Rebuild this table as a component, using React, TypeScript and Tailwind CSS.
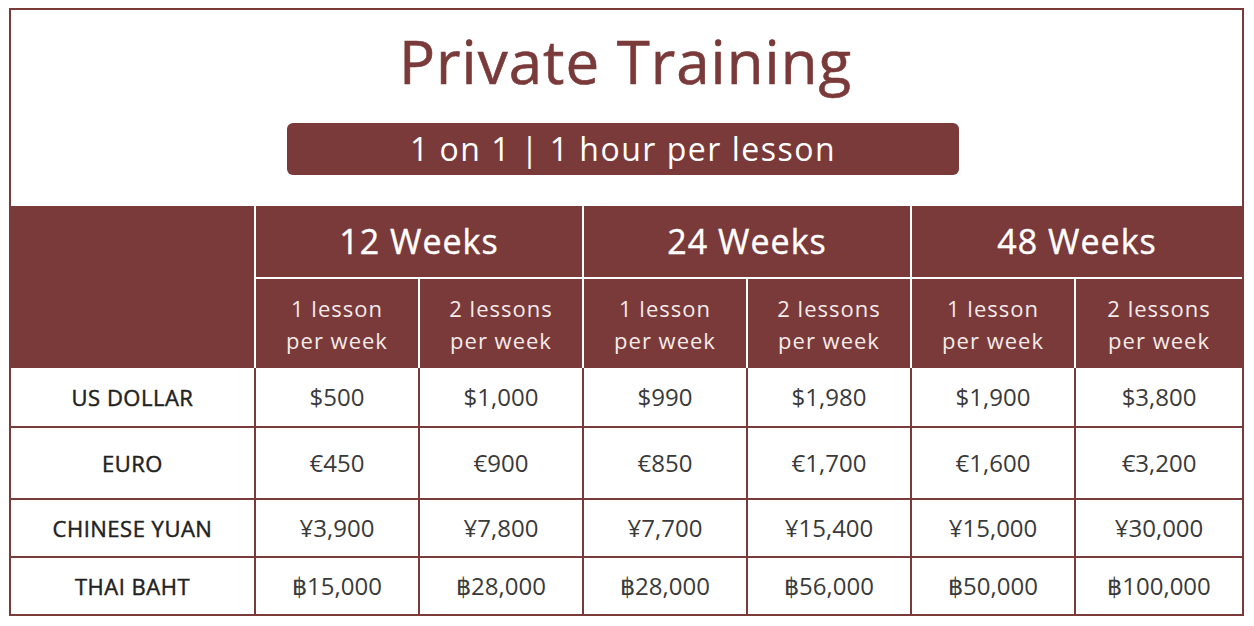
import React from 'react';

const weeks = ['12 Weeks', '24 Weeks', '48 Weeks'];

const rows = [
  { name: 'US DOLLAR', prices: ['$500', '$1,000', '$990', '$1,980', '$1,900', '$3,800'], h: 'h-[59px]' },
  { name: 'EURO', prices: ['€450', '€900', '€850', '€1,700', '€1,600', '€3,200'], h: 'h-[72px]' },
  { name: 'CHINESE YUAN', prices: ['¥3,900', '¥7,800', '¥7,700', '¥15,400', '¥15,000', '¥30,000'], h: 'h-[58px]' },
  { name: 'THAI BAHT', prices: ['฿15,000', '฿28,000', '฿28,000', '฿56,000', '฿50,000', '฿100,000'], h: 'h-[57px]' },
];

export default function App() {
  return (
    <div className="w-[1254px] h-[626px] bg-white pl-[9px] pt-[8px] font-['Open_Sans','Noto_Sans',sans-serif]">
      <div className="w-[1235px] border-2 border-[#7a3a3a] bg-white">
        {/* title block */}
        <div className="h-[196px] flex flex-col items-center">
          <h1 className="mt-[17px] mr-[2px] text-[60px] leading-[68px] text-[#7a3a3a] tracking-[1px] [-webkit-text-stroke:0.6px_#7a3a3a]">Private Training</h1>
          <div className="mt-[28px] mr-[7px] w-[672px] h-[52px] rounded-[6px] bg-[#7a3a3a] flex items-center justify-center">
            <span className="text-[32px] text-white tracking-[1.5px] leading-none">1 on 1 | 1 hour per lesson</span>
          </div>
        </div>

        {/* price table */}
        <table className="w-[1231px] table-fixed border-collapse">
          <colgroup>
            <col className="w-[244px]" />
            <col className="w-[164px]" />
            <col className="w-[164px]" />
            <col className="w-[164px]" />
            <col className="w-[164px]" />
            <col className="w-[164px]" />
            <col className="w-[167px]" />
          </colgroup>
          <thead className="bg-[#7a3a3a] text-white">
            <tr className="h-[72px]">
              <th rowSpan={2} className="border-r-2 border-white"></th>
              {weeks.map((w, i) => (
                <th
                  key={w}
                  colSpan={2}
                  className={`border-b-2 border-white text-[34px] font-normal tracking-[1px] [-webkit-text-stroke:0.4px_white] ${i < 2 ? 'border-r-2' : ''}`}
                >
                  {w}
                </th>
              ))}
            </tr>
            <tr className="h-[90px]">
              {[0, 1, 2, 3, 4, 5].map((i) => (
                <th
                  key={i}
                  className={`font-normal text-[22px] leading-[32px] tracking-[1px] text-[#f5eaea] ${i < 5 ? 'border-r-2 border-white' : ''}`}
                >
                  {i % 2 === 0 ? '1 lesson' : '2 lessons'}
                  <br />
                  per week
                </th>
              ))}
            </tr>
          </thead>
          <tbody>
            {rows.map((r, ri) => (
              <tr key={r.name} className={r.h}>
                <td className={`border-r-2 border-[#7a3a3a] text-center text-[22px] tracking-[0.5px] text-[#222222] [-webkit-text-stroke:0.45px_#222222] ${ri > 0 ? 'border-t-2' : ''}`}>
                  {r.name}
                </td>
                {r.prices.map((p, pi) => (
                  <td
                    key={pi}
                    className={`border-[#7a3a3a] text-center text-[24px] text-[#3a3a3a] ${pi < 5 ? 'border-r-2' : ''} ${ri > 0 ? 'border-t-2' : ''}`}
                  >
                    {p}
                  </td>
                ))}
              </tr>
            ))}
          </tbody>
        </table>
      </div>
    </div>
  );
}
